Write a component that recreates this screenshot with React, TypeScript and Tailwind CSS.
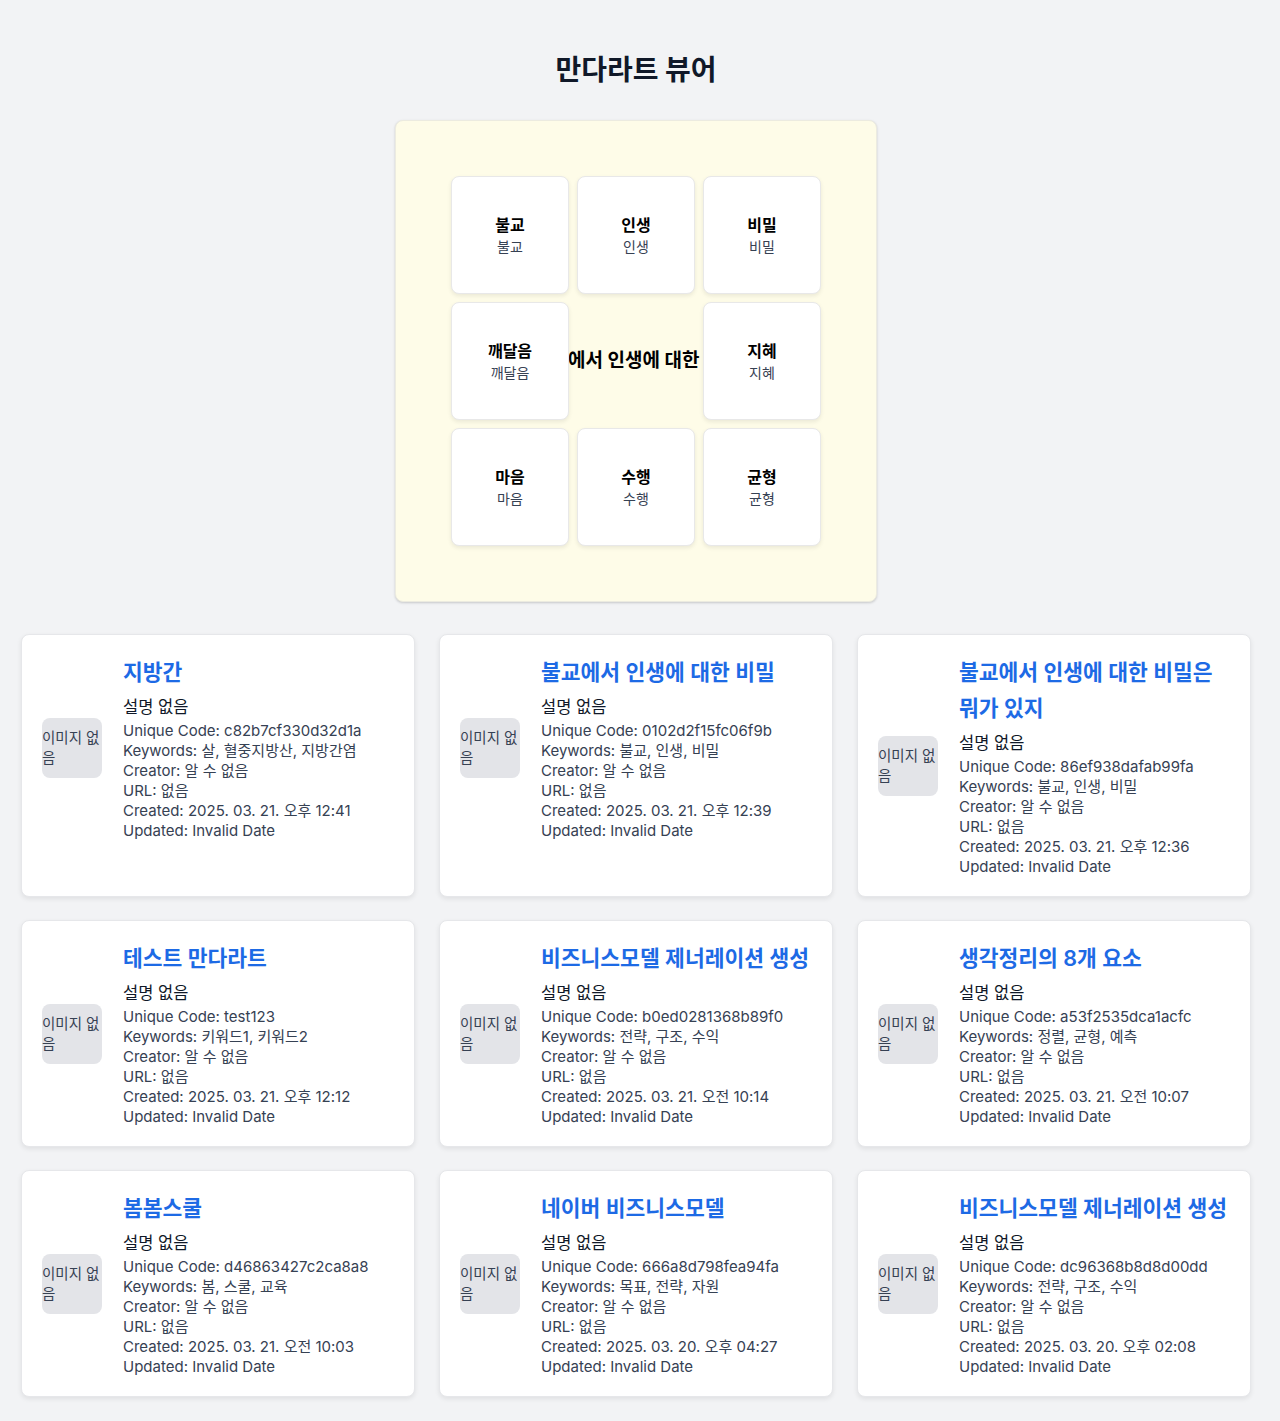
const cells = [
  { title: "불교", sub: "불교" },
  { title: "인생", sub: "인생" },
  { title: "비밀", sub: "비밀" },
  { title: "깨달음", sub: "깨달음" },
  null,
  { title: "지혜", sub: "지혜" },
  { title: "마음", sub: "마음" },
  { title: "수행", sub: "수행" },
  { title: "균형", sub: "균형" },
];

const mandalarts = [
  { title: "지방간", code: "c82b7cf330d32d1a", keywords: "살, 혈중지방산, 지방간염", created: "2025. 03. 21. 오후 12:41" },
  { title: "불교에서 인생에 대한 비밀", code: "0102d2f15fc06f9b", keywords: "불교, 인생, 비밀", created: "2025. 03. 21. 오후 12:39" },
  { title: "불교에서 인생에 대한 비밀은 뭐가 있지", code: "86ef938dafab99fa", keywords: "불교, 인생, 비밀", created: "2025. 03. 21. 오후 12:36" },
  { title: "테스트 만다라트", code: "test123", keywords: "키워드1, 키워드2", created: "2025. 03. 21. 오후 12:12" },
  { title: "비즈니스모델 제너레이션 생성", code: "b0ed0281368b89f0", keywords: "전략, 구조, 수익", created: "2025. 03. 21. 오전 10:14" },
  { title: "생각정리의 8개 요소", code: "a53f2535dca1acfc", keywords: "정렬, 균형, 예측", created: "2025. 03. 21. 오전 10:07" },
  { title: "봄봄스쿨", code: "d46863427c2ca8a8", keywords: "봄, 스쿨, 교육", created: "2025. 03. 21. 오전 10:03" },
  { title: "네이버 비즈니스모델", code: "666a8d798fea94fa", keywords: "목표, 전략, 자원", created: "2025. 03. 20. 오후 04:27" },
  { title: "비즈니스모델 제너레이션 생성", code: "dc96368b8d8d00dd", keywords: "전략, 구조, 수익", created: "2025. 03. 20. 오후 02:08" },
];

const App = () => {
  return (
    <main className="min-h-screen bg-[#f2f3f5] font-['Inter','Noto_Sans_CJK_KR',sans-serif] text-gray-900">
      <div className="w-[1272px] pt-[52px] pb-6">
        {/* Header */}
        <h1 className="text-center text-[28px] leading-9 font-bold text-gray-900 mb-8">만다라트 뷰어</h1>

        {/* Mandalart grid */}
        <section className="w-[482px] h-[482px] mx-auto bg-[#fefce8] rounded-lg shadow-[0_1px_3px_rgba(0,0,0,0.12),0_1px_2px_rgba(0,0,0,0.06)] border border-[#ecebe0] p-[55px]">
          <div className="grid grid-cols-[118px_118px_118px] grid-rows-[118px_118px_118px] gap-2">
            {cells.map((cell, index) =>
              cell ? (
                <div
                  key={index}
                  className="relative bg-white rounded-lg border border-[#e8e8e8] shadow-[0_2px_4px_rgba(0,0,0,0.08)] flex flex-col items-center justify-center"
                >
                  <span className="text-[16px] leading-6 font-bold text-black">{cell.title}</span>
                  <span className="text-[14px] leading-5 text-gray-700">{cell.sub}</span>
                </div>
              ) : (
                <div key={index} className="flex items-center justify-center whitespace-nowrap text-[19px] font-bold text-black">
                  불교에서 인생에 대한 비밀
                </div>
              )
            )}
          </div>
        </section>

        {/* Cards */}
        <section className="mt-8 px-[21px] grid grid-cols-3 gap-x-6 gap-y-[23px]">
          {mandalarts.map((item, index) => (
            <div key={index} className="bg-white rounded-lg border border-[#e6e7ea] shadow-[0_2px_5px_rgba(0,0,0,0.08)] px-5 py-[19px]">
              <div className="flex items-center gap-[21px]">
                <div className="w-[60px] h-[60px] shrink-0 rounded-lg bg-[#e3e4e8] flex items-center text-[14.5px] leading-5 text-gray-700">
                  이미지 없음
                </div>
                <div className="min-w-0 flex-1">
                  <h2 className="text-[21.5px] leading-9 font-semibold text-[#1d6ae5] mb-[5px]">{item.title}</h2>
                  <p className="text-[16.5px] leading-6 text-gray-900 mb-[2px]">설명 없음</p>
                  <div className="text-[15px] leading-5 text-gray-700">
                    <p>Unique Code: {item.code}</p>
                    <p>Keywords: {item.keywords}</p>
                    <p>Creator: 알 수 없음</p>
                    <p>URL: 없음</p>
                    <p>Created: {item.created}</p>
                    <p>Updated: Invalid Date</p>
                  </div>
                </div>
              </div>
            </div>
          ))}
        </section>
      </div>
    </main>
  );
};

export default App;
